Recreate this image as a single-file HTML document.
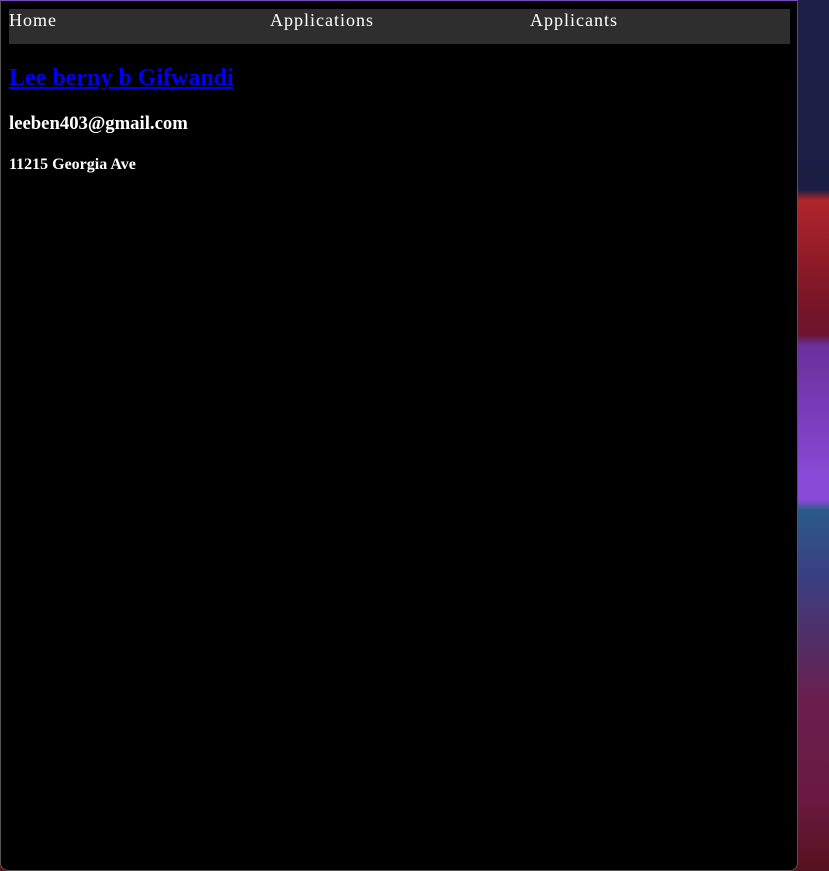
<!DOCTYPE html>
<html><head><style>
html,body{margin:0;padding:0;width:829px;height:871px;overflow:hidden;}
body{position:relative;background:linear-gradient(180deg,#1c1f48 0px,#1c1d45 190px,#b0252a 200px,#7a1527 300px,#6b1530 335px,#6a2f9a 345px,#8a4ad8 480px,#8a4ad8 500px,#2a5a8a 510px,#3a3e80 580px,#6a1e4e 700px,#6a1a40 800px,#55121e 871px);font-family:"Liberation Serif",serif;}
.win{position:absolute;left:0;top:0;width:796px;height:869px;background:#000;border:1px solid #555;border-top:1px solid #7a4ab8;border-radius:0 0 8px 8px;}
.nav{position:absolute;left:8px;top:8px;width:781px;height:35px;background:#2e2e2e;color:#fff;font-size:18px;letter-spacing:1px;}
.nav span{position:absolute;top:1px;}
h2{position:absolute;left:8px;top:64px;margin:0;font-size:24px;font-weight:bold;}
h2 a{color:#0000ee;}
h3{position:absolute;left:8px;top:112px;margin:0;font-size:18.7px;color:#fff;}
h4{position:absolute;left:8px;top:155px;margin:0;font-size:16px;color:#fff;}
</style></head><body>
<div class="win">
<div class="nav"><span style="left:0">Home</span><span style="left:261px">Applications</span><span style="left:521px">Applicants</span></div>
<h2><a href="#">Lee berny b Gifwandi</a></h2>
<h3>leeben403@gmail.com</h3>
<h4>11215 Georgia Ave</h4>
</div>
</body></html>
